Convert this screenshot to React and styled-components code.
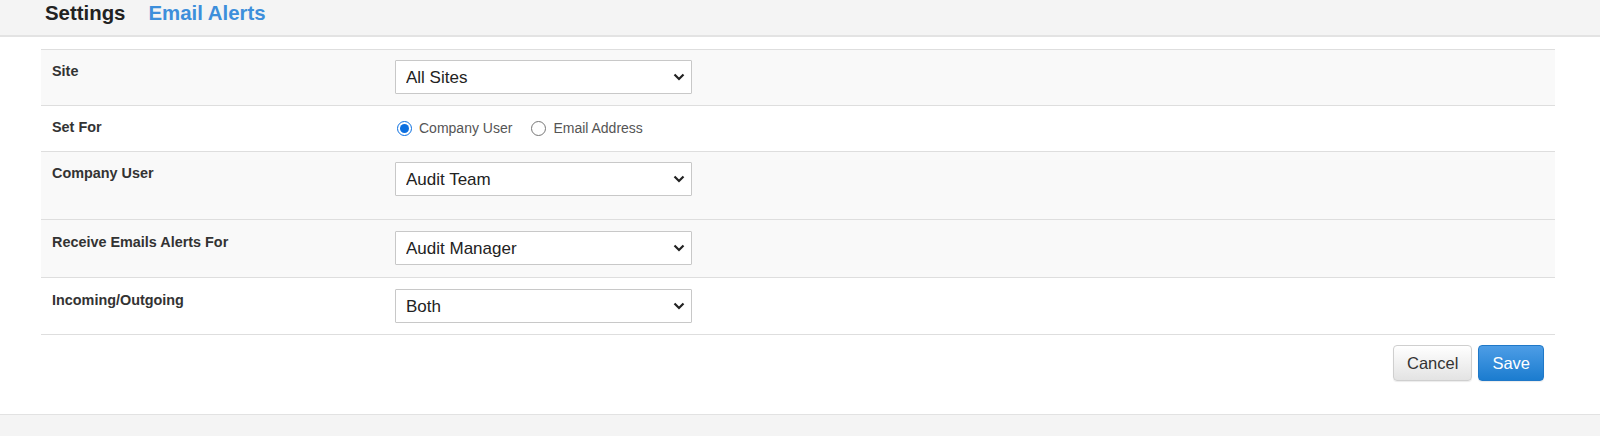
import React from 'react';
import styled, { createGlobalStyle } from 'styled-components';

const GlobalStyle = createGlobalStyle`
  html, body {
    margin: 0;
    padding: 0;
    background: #fff;
  }
  body {
    font-family: "Liberation Sans", Arial, sans-serif;
  }
`;

const Page = styled.div`
  display: flex;
  flex-direction: column;
  height: 436px;
`;

const Header = styled.div`
  height: 37px;
  box-sizing: border-box;
  background: #f4f4f4;
  border-bottom: 2px solid #e3e3e3;
  display: flex;
  gap: 23px;
  padding: 1px 0 0 45px;
`;

const Title = styled.h1`
  margin: 0;
  font-size: 20.4px;
  line-height: 24px;
  font-weight: bold;
  color: ${props => props.$accent ? '#3d8fdb' : '#222'};
`;

const Main = styled.main`
  padding: 12px 45px 0 41px;
`;

const Table = styled.div`
  border-top: 1px solid #dedede;
`;

const Row = styled.div`
  display: grid;
  grid-template-columns: 343px 1fr;
  background: ${props => props.$shade ? '#f9f9f9' : '#fff'};
  border-bottom: 1px solid #dedede;
`;

const Cell = styled.div`
  padding: ${props => props.$pt || 10}px 11px ${props => props.$pb || 11}px;
`;

const Label = styled.div`
  margin-top: 1px;
  font-size: 14.4px;
  line-height: 20px;
  font-weight: bold;
  color: #333;
`;

const SelectWrap = styled.div`
  position: relative;
  width: 297px;
  height: 34px;
`;

const Select = styled.select`
  width: 100%;
  height: 100%;
  box-sizing: border-box;
  appearance: none;
  border: 1px solid #c8c8c8;
  border-radius: 1px;
  background: #fff;
  padding: 0 30px 0 10px;
  font-family: "Liberation Sans", Arial, sans-serif;
  font-size: 17px;
  color: #222;
  outline: none;
`;

const Chevron = styled.svg`
  position: absolute;
  right: 7px;
  top: 50%;
  margin-top: -4px;
  pointer-events: none;
`;

const RadioGroup = styled.div`
  display: flex;
  align-items: center;
  height: 20px;
`;

const RadioLabel = styled.label`
  display: flex;
  align-items: center;
  gap: 7px;
  margin-right: 17px;
  font-size: 14px;
  color: #555;
`;

const Radio = styled.input`
  width: 15px;
  height: 15px;
  margin: 0 0 0 2px;
  accent-color: #0b6fe0;
`;

const Actions = styled.div`
  display: flex;
  justify-content: flex-end;
  gap: 6px;
  padding: 10px 11px 0 0;
`;

const Button = styled.button`
  height: 36px;
  padding: 0 13px;
  border-radius: 4px;
  font-family: "Liberation Sans", Arial, sans-serif;
  font-size: 16.5px;
  cursor: pointer;
  border: 1px solid ${props => props.$primary ? '#1f78c8' : '#cfcfcf'};
  color: ${props => props.$primary ? '#fff' : '#333'};
  background: ${props => props.$primary
    ? 'linear-gradient(#4d9de6, #1b7ccf)'
    : 'linear-gradient(#ffffff, #e3e3e3)'};
  box-shadow: 0 1px 1px rgba(0, 0, 0, 0.08);
`;

const Footer = styled.div`
  margin-top: auto;
  height: 22px;
  box-sizing: border-box;
  background: #f4f4f4;
  border-top: 1px solid #e2e2e2;
`;

const Dropdown = ({ value, options }) => (
  <SelectWrap>
    <Select defaultValue={value}>
      {options.map(o => <option key={o}>{o}</option>)}
    </Select>
    <Chevron width="12" height="8" viewBox="0 0 12 8">
      <path d="M1.5 1.5 L6 6 L10.5 1.5" fill="none" stroke="#222" strokeWidth="2.2" />
    </Chevron>
  </SelectWrap>
);

export default function App() {
  return (
    <Page>
      <GlobalStyle />
      <Header>
        <Title>Settings</Title>
        <Title $accent>Email Alerts</Title>
      </Header>
      <Main>
        <Table>
          <Row $shade>
            <Cell><Label>Site</Label></Cell>
            <Cell><Dropdown value="All Sites" options={['All Sites']} /></Cell>
          </Row>
          <Row>
            <Cell $pb={14}><Label>Set For</Label></Cell>
            <Cell $pt={12} $pb={13}>
              <RadioGroup>
                <RadioLabel>
                  <Radio type="radio" name="setfor" defaultChecked />
                  Company User
                </RadioLabel>
                <RadioLabel>
                  <Radio type="radio" name="setfor" />
                  Email Address
                </RadioLabel>
              </RadioGroup>
            </Cell>
          </Row>
          <Row $shade>
            <Cell $pb={23}><Label>Company User</Label></Cell>
            <Cell $pb={23}><Dropdown value="Audit Team" options={['Audit Team']} /></Cell>
          </Row>
          <Row $shade>
            <Cell $pt={11} $pb={12}><Label>Receive Emails Alerts For</Label></Cell>
            <Cell $pt={11} $pb={12}><Dropdown value="Audit Manager" options={['Audit Manager']} /></Cell>
          </Row>
          <Row>
            <Cell $pt={11} $pb={11}><Label>Incoming/Outgoing</Label></Cell>
            <Cell $pt={11} $pb={11}><Dropdown value="Both" options={['Both']} /></Cell>
          </Row>
        </Table>
        <Actions>
          <Button>Cancel</Button>
          <Button $primary>Save</Button>
        </Actions>
      </Main>
      <Footer />
    </Page>
  );
}
